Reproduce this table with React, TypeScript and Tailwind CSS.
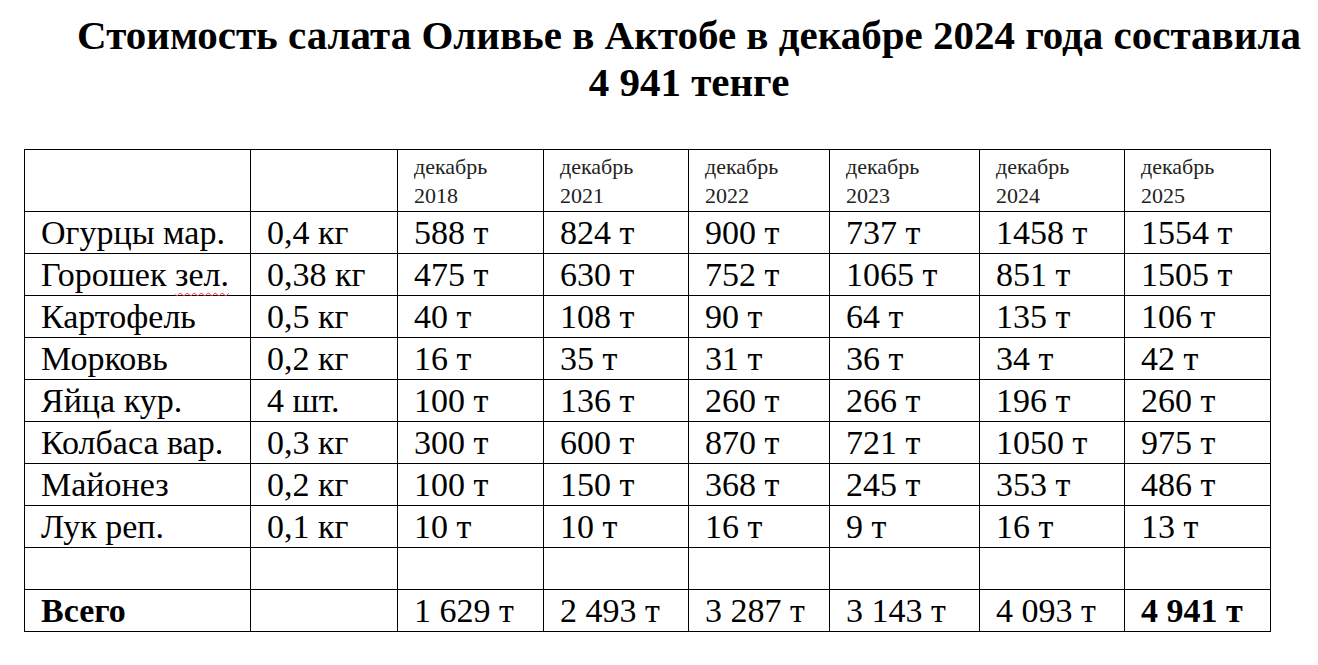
const years = ["2018", "2021", "2022", "2023", "2024", "2025"];

const widths = ["w-[146px]", "w-[145px]", "w-[141px]", "w-[150px]", "w-[145px]", "w-[146px]"];

const rows: { name: string; qty: string; values: string[] }[] = [
  { name: "Огурцы мар.", qty: "0,4 кг", values: ["588 т", "824 т", "900 т", "737 т", "1458 т", "1554 т"] },
  { name: "Горошек зел.", qty: "0,38 кг", values: ["475 т", "630 т", "752 т", "1065 т", "851 т", "1505 т"] },
  { name: "Картофель", qty: "0,5 кг", values: ["40 т", "108 т", "90 т", "64 т", "135 т", "106 т"] },
  { name: "Морковь", qty: "0,2 кг", values: ["16 т", "35 т", "31 т", "36 т", "34 т", "42 т"] },
  { name: "Яйца кур.", qty: "4 шт.", values: ["100 т", "136 т", "260 т", "266 т", "196 т", "260 т"] },
  { name: "Колбаса вар.", qty: "0,3 кг", values: ["300 т", "600 т", "870 т", "721 т", "1050 т", "975 т"] },
  { name: "Майонез", qty: "0,2 кг", values: ["100 т", "150 т", "368 т", "245 т", "353 т", "486 т"] },
  { name: "Лук реп.", qty: "0,1 кг", values: ["10 т", "10 т", "16 т", "9 т", "16 т", "13 т"] },
];

const totals = ["1 629 т", "2 493 т", "3 287 т", "3 143 т", "4 093 т"];

const cell =
  "border border-black pl-4 pr-1 align-middle h-[42px] leading-none text-[34px] whitespace-nowrap font-['Times_New_Roman']";

export default function App() {
  return (
    <div className="font-['Liberation_Serif']">
      <h1 className="pt-[12px] pl-[60px] text-center text-[41px] leading-[47px] font-bold font-['Times_New_Roman']">
        Стоимость салата Оливье в Актобе в декабре 2024 года составила
        <br />4 941 тенге
      </h1>

      <table className="mt-[43px] ml-[24px] border-collapse table-fixed w-[1247px] font-['Times_New_Roman']">
        <tbody>
          <tr>
            <td className="border border-black h-[62px] w-[226px]" />
            <td className="border border-black w-[147px]" />
            {years.map((y, i) => (
              <td
                key={y}
                className={
                  "border border-black pl-4 align-top pt-[2px] text-[22px] leading-[29px] text-[#222] font-['Times_New_Roman'] " +
                  widths[i]
                }
              >
                декабрь
                <br />
                {y}
              </td>
            ))}
          </tr>
          {rows.map((r) => (
            <tr key={r.name}>
              <td className={cell}>
                {r.name === "Горошек зел." ? (
                  <>
                    Горошек{" "}
                    <span className="underline decoration-wavy decoration-red-500 decoration-1 underline-offset-[6px]">
                      зел.
                    </span>
                  </>
                ) : (
                  r.name
                )}
              </td>
              <td className={cell}>{r.qty}</td>
              {r.values.map((v, i) => (
                <td key={i} className={cell}>
                  {v}
                </td>
              ))}
            </tr>
          ))}
          <tr>
            {[0, 1, 2, 3, 4, 5, 6, 7].map((i) => (
              <td key={i} className="border border-black h-[42px]" />
            ))}
          </tr>
          <tr>
            <td className={cell + " font-bold"}>Всего</td>
            <td className={cell} />
            {totals.map((t, i) => (
              <td key={i} className={cell}>
                {t}
              </td>
            ))}
            <td className={cell + " font-bold"}>4 941 т</td>
          </tr>
        </tbody>
      </table>
    </div>
  );
}
